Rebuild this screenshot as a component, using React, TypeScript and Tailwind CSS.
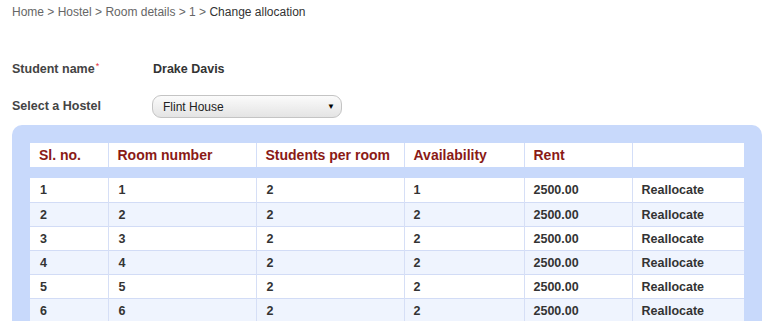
const rooms = [1, 2, 3, 4, 5, 6].map((n) => ({
  sl: n,
  room: n,
  perRoom: 2,
  avail: n === 1 ? 1 : 2,
  rent: "2500.00",
}));

const headers = ["Sl. no.", "Room number", "Students per room", "Availability", "Rent", ""];

export default function App() {
  return (
    <div className="h-[321px] overflow-hidden bg-white font-['Liberation_Sans',Arial,sans-serif]">
      <div className="px-3 pt-[5px] text-[12px] leading-[14px] text-[#666]">
        Home &gt; Hostel &gt; Room details &gt; 1 &gt; <span className="text-[#333]">Change allocation</span>
      </div>

      <div className="px-3 mt-[43px] flex items-center text-[12.5px] font-bold text-[#444] leading-[14px]">
        <div className="w-[141px]">
          Student name<sup className="text-[#e0303a] text-[9px] font-normal ml-[1px]">*</sup>
        </div>
        <div className="text-[#333]">Drake Davis</div>
      </div>

      <div className="px-3 mt-[19px] flex items-center text-[12.5px] font-bold text-[#444]">
        <div className="w-[140px]">Select a Hostel</div>
        <div className="w-[190px] h-[23px] rounded-[9px] border border-[#c4c4c4] bg-gradient-to-b from-[#fbfbfb] to-[#e4e4e4] flex items-center justify-between pl-[10px] pr-[6px] text-[12px] font-normal text-[#222]">
          <span>Flint House</span>
          <span className="text-[8px] text-black">▼</span>
        </div>
      </div>

      <div className="ml-3 mr-[6px] mt-[7px] rounded-t-[10px] bg-[#c8d9fb] px-[18px] pt-[18px]">
        <table className="w-full table-fixed border-collapse text-[12.5px]">
          <colgroup>
            <col className="w-[78px]" />
            <col className="w-[148px]" />
            <col className="w-[148px]" />
            <col className="w-[120px]" />
            <col className="w-[108px]" />
            <col className="w-[112px]" />
          </colgroup>
          <thead>
            <tr className="bg-white h-[24px]">
              {headers.map((h, i) => (
                <th
                  key={i}
                  className="text-left font-bold text-[14px] text-[#8a1a16] pl-[9px] border-l border-[#d3def8] first:border-l-0 leading-[16px]"
                >
                  {h}
                </th>
              ))}
            </tr>
            <tr className="h-[11px]">
              <th colSpan={6}></th>
            </tr>
          </thead>
          <tbody>
            {rooms.map((r, i) => (
              <tr
                key={r.sl}
                className={`h-[24px] border-b border-[#d2dcf6] text-[#333] font-bold ${i % 2 === 0 ? "bg-white" : "bg-[#eff4fe]"}`}
              >
                <td className="pl-[10px] pt-[2px] border-l border-[#d6dff6] first:border-l-0">{r.sl}</td>
                <td className="pl-[10px] pt-[2px] border-l border-[#d6dff6]">{r.room}</td>
                <td className="pl-[10px] pt-[2px] border-l border-[#d6dff6]">{r.perRoom}</td>
                <td className="pl-[9px] pt-[2px] border-l border-[#d6dff6]">{r.avail}</td>
                <td className="pl-[9px] pt-[2px] border-l border-[#d6dff6]">{r.rent}</td>
                <td className="pl-[9px] pt-[2px] border-l border-[#d6dff6]">Reallocate</td>
              </tr>
            ))}
          </tbody>
        </table>
      </div>
    </div>
  );
}
